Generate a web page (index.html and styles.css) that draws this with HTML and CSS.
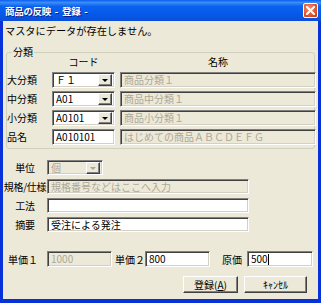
FILE: index.html
```html
<!DOCTYPE html>
<html lang="ja">
<head>
<meta charset="utf-8">
<link rel="stylesheet" href="styles.css">
</head>
<body>
<div class="win">
  <div class="title">
    <span class="title-text">商品の反映 - 登録 -</span>
    <span class="close"><svg width="9" height="9" viewBox="0 0 9 9"><path d="M1 1L8 8M8 1L1 8" stroke="#fff" stroke-width="2" stroke-linecap="square"/></svg></span>
  </div>
  <div class="body">
    <div class="msg">マスタにデータが存在しません。</div>
    <div class="group">
      <span class="legend">分類</span>
      <div class="grid">
        <span></span><span class="hdr">コード</span><span class="hdr">名称</span>
        <span class="lbl">大分類</span>
        <div class="field combo"><span class="val">Ｆ１</span><span class="dd"><i></i></span></div>
        <div class="field dis">商品分類１</div>
        <span class="lbl">中分類</span>
        <div class="field combo"><span class="val">A01</span><span class="dd"><i></i></span></div>
        <div class="field dis">商品中分類１</div>
        <span class="lbl">小分類</span>
        <div class="field combo"><span class="val">A0101</span><span class="dd"><i></i></span></div>
        <div class="field dis">商品小分類１</div>
        <span class="lbl">品名</span>
        <div class="field">A010101</div>
        <div class="field dis">はじめての商品ＡＢＣＤＥＦＧ</div>
      </div>
    </div>
    <div class="lower">
      <div class="lrow r1"><span class="l2">単位</span><div class="field combo dis unit"><span class="val">個</span><span class="dd off"><i></i></span></div></div>
      <div class="lrow"><span class="l2">規格/仕様</span><div class="field dis wide">規格番号などはここへ入力</div></div>
      <div class="lrow"><span class="l2">工法</span><div class="field wide"></div></div>
      <div class="lrow"><span class="l2">摘要</span><div class="field wide">受注による発注</div></div>
    </div>
    <div class="prices">
      <span class="pl p1">単価１</span><div class="field dis pf1">1000</div>
      <span class="pl p2">単価２</span><div class="field pf2">800</div>
      <span class="pl p3">原価</span><div class="field pf3">500<span class="caret"></span></div>
    </div>
    <div class="buttons">
      <button class="btn b1">登録(<u>A</u>)</button>
      <button class="btn b2">ｷｬﾝｾﾙ</button>
    </div>
  </div>
</div>
</body>
</html>
```

FILE: styles.css
```css
* { box-sizing: border-box; }
body {
  margin: 0;
  background: #fff;
  font-family: "Noto Sans CJK JP", "DejaVu Sans", sans-serif;
  font-size: 10px;
  color: #000;
}
.win {
  width: 321px;
  height: 303px;
  display: flex;
  flex-direction: column;
  background: #0831D9;
}
.title {
  height: 21px;
  flex: none;
  display: flex;
  align-items: center;
  justify-content: space-between;
  padding: 0 3px 0 5px;
  background: linear-gradient(#0A5FEE 0%, #3C8CF8 12%, #0B62F0 30%, #0558E8 70%, #0A4FD8 100%);
}
.title-text {
  color: #fff;
  font-weight: bold;
  font-size: 9.5px;
  letter-spacing: -0.3px;
  word-spacing: 2px;
  line-height: 12px;
  white-space: pre;
  text-shadow: 1px 1px #0A1E8C;
}
.close {
  width: 15px;
  height: 15px;
  border: 1px solid #fff;
  border-radius: 2px;
  background: radial-gradient(circle at 40% 35%, #F08F70, #E0552D 60%, #C23A12);
  display: flex;
  align-items: center;
  justify-content: center;
}
.body {
  flex: 1;
  margin: 0 3px 4px 3px;
  background: #ECE9D8;
  display: flex;
  flex-direction: column;
}
.msg {
  margin: 4px 0 0 2px;
  height: 12px;
  line-height: 12px;
  font-size: 10.2px;
}
.group {
  position: relative;
  margin: 15px 0 0 3px;
  width: 309px;
  height: 97px;
  border: 1px solid #D0D0BF;
  border-radius: 3px;
}
.legend {
  position: absolute;
  top: -7px;
  left: 5px;
  padding: 0 1px;
  background: #ECE9D8;
  line-height: 12px;
}
.grid {
  display: grid;
  grid-template-columns: 40px 63px 196px;
  grid-template-rows: 14px 16px 16px 16px 16px;
  column-gap: 5px;
  row-gap: 3px;
  padding-top: 2px;
}
.hdr {
  line-height: 14px;
  text-align: center;
}
.lbl {
  line-height: 16px;
  white-space: nowrap;
}
.field {
  height: 16px;
  background: #fff;
  border: 1px solid;
  border-color: #808080 #fff #fff #808080;
  box-shadow: inset 1px 1px #404040, inset -1px -1px #D4D0C8;
  line-height: 14px;
  padding-left: 3px;
  white-space: nowrap;
  overflow: hidden;
  font-size: 10px;
}
.field.dis {
  background: #ECE9D8;
  color: #ACA899;
}
.combo {
  display: flex;
  justify-content: space-between;
  padding-right: 2px;
}
.dd {
  width: 14px;
  height: 12px;
  margin-top: 1px;
  background: #ECE9D8;
  border: 1px solid;
  border-color: #fff #404040 #404040 #fff;
  box-shadow: inset -1px -1px #808080;
  display: flex;
  align-items: center;
  justify-content: center;
}
.dd i {
  width: 0;
  height: 0;
  border-left: 3px solid transparent;
  border-right: 3px solid transparent;
  border-top: 3px solid #000;
}
.dd.off i { border-top-color: #ACA899; }
.lower {
  display: flex;
  flex-direction: column;
  gap: 4px;
  margin-top: 11px;
}
.lrow {
  display: flex;
  align-items: center;
  height: 15px;
}
.l2 {
  width: 44px;
  text-align: center;
  white-space: nowrap;
  letter-spacing: -0.3px;
}
.unit { width: 56px; }
.wide { width: 202px; }
.lrow .field { height: 15px; line-height: 13px; }
.prices {
  display: flex;
  align-items: center;
  height: 16px;
  margin-top: 19px;
}
.pl { white-space: nowrap; }
.p1 { margin-left: 5px; width: 39px; }
.pf1 { width: 65px; }
.p2 { margin-left: 3px; width: 30px; }
.pf2 { width: 65px; }
.p3 { margin-left: 12px; width: 25px; }
.pf3 { width: 66px; }
.caret {
  display: inline-block;
  width: 1px;
  height: 11px;
  background: #000;
  vertical-align: -2px;
}
.buttons {
  display: flex;
  gap: 6px;
  margin: 9px 0 0 180px;
}
.btn {
  height: 17px;
  padding: 0;
  font-family: inherit;
  font-size: 10px;
  background: #ECE9D8;
  border: 1px solid;
  border-color: #fff #404040 #404040 #fff;
  box-shadow: inset -1px -1px #808080;
  color: #000;
  line-height: 13px;
}
.b1 { width: 55px; }
.b2 { width: 63px; }
```
